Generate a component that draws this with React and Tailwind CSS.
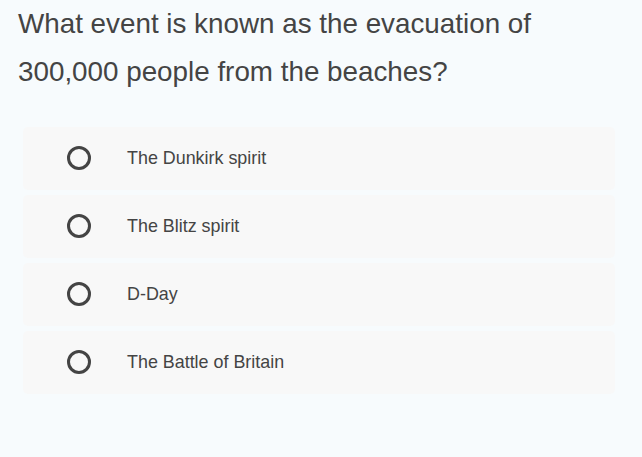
const options = ['The Dunkirk spirit', 'The Blitz spirit', 'D-Day', 'The Battle of Britain']

export default function App() {
    return (
        <div className="min-h-[457px] w-full bg-[#f7fbfd] text-[#444444]" style={{ fontFamily: '"Liberation Sans", Arial, sans-serif' }}>
            <h1 className="pl-[18px] pr-4 text-[27.8px] leading-[48.4px] font-normal">
                What event is known as the evacuation of
                <br />
                300,000 people from the beaches?
            </h1>

            <div className="mt-[30px] ml-[23px] w-[592px] flex flex-col gap-[5px]">
                {options.map(opt => (
                    <label key={opt} className="h-[63px] flex items-center rounded-[5px] bg-[#f8f8f8] pl-[44px] cursor-pointer">
                        <span className="w-[24px] h-[24px] rounded-full border-[3px] border-[#444444] shrink-0" />
                        <span className="ml-[36px] text-[17.9px]">{opt}</span>
                    </label>
                ))}
            </div>
        </div>
    )
}
